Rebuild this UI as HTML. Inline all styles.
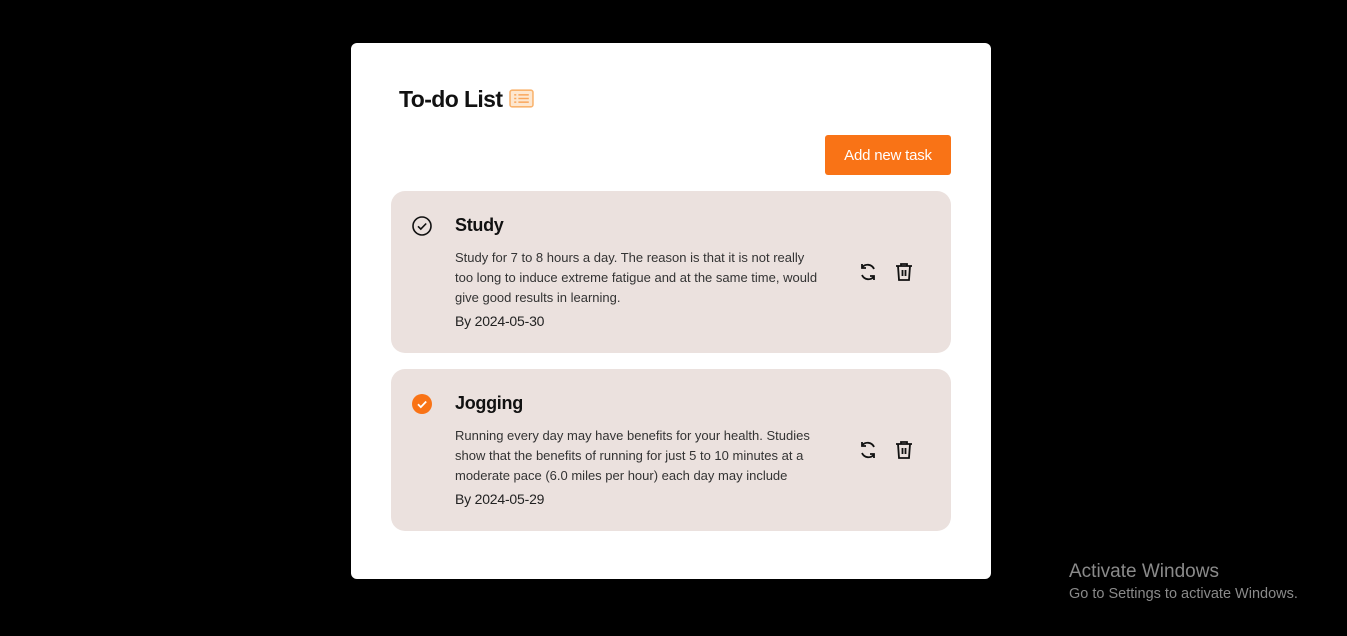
<!DOCTYPE html>
<html><head><style>
body{margin:0;width:1347px;height:636px;background:#000;font-family:"Liberation Sans",sans-serif;position:relative;overflow:hidden}
.card{position:absolute;left:351px;top:43px;width:640px;height:536px;background:#fff;border-radius:6px}
h1{position:absolute;left:48px;top:43px;margin:0;font-size:23px;font-weight:bold;color:#111;letter-spacing:-0.6px}
.btn{position:absolute;left:474px;top:92px;width:126px;height:40px;background:#f97316;color:#fff;border-radius:3px;font-size:15px;line-height:42px;text-align:center;letter-spacing:-0.2px}
.task{position:absolute;left:40px;width:560px;height:162px;background:#ebe1de;border-radius:14px}
.task h2{position:absolute;left:64px;top:24px;margin:0;font-size:18px;font-weight:bold;color:#111;letter-spacing:-0.3px}
.task p{position:absolute;left:64px;top:57px;margin:0;width:370px;font-size:13px;line-height:20px;color:#333}
.task .by{position:absolute;left:64px;top:122px;font-size:14px;color:#222;letter-spacing:-0.2px}
.chk{position:absolute;left:20px;top:24px}
.ic{position:absolute;top:70px}
.wm{position:absolute;left:1069px;top:561px;color:#8a8a8a}
</style></head><body>
<div class="card">
<h1>To-do List <svg width="25" height="19" viewBox="0 0 24 18" style="vertical-align:-1px;margin-left:1px"><rect x="1" y="1" width="22" height="16" rx="2" fill="#fde7d0" stroke="#f9b36e" stroke-width="1.5"/><g stroke="#f9a55a" stroke-width="1.4"><line x1="5" y1="5.5" x2="7" y2="5.5"/><line x1="9" y1="5.5" x2="19" y2="5.5"/><line x1="5" y1="9" x2="7" y2="9"/><line x1="9" y1="9" x2="19" y2="9"/><line x1="5" y1="12.5" x2="7" y2="12.5"/><line x1="9" y1="12.5" x2="19" y2="12.5"/></g></svg></h1>
<div class="btn">Add new task</div>
<div class="task" style="top:148px">
<svg class="chk" width="22" height="22" viewBox="0 0 22 22"><circle cx="11" cy="11" r="9" fill="none" stroke="#111" stroke-width="1.6"/><path d="M7 11.3l2.8 2.8 5.4-5.6" fill="none" stroke="#111" stroke-width="1.6"/></svg>
<h2>Study</h2>
<p>Study for 7 to 8 hours a day. The reason is that it is not really too long to induce extreme fatigue and at the same time, would give good results in learning.</p>
<div class="by">By 2024-05-30</div>
<svg class="ic" style="left:466px" width="22" height="22" viewBox="0 0 22 22" fill="none" stroke="#111" stroke-width="1.8"><path d="M17 8A7 7 0 0 0 5 6.5M5 14a7 7 0 0 0 12 1.5"/><path d="M5 3v4h4M17 19v-4h-4"/></svg>
<svg class="ic" style="left:502px" width="22" height="22" viewBox="0 0 22 22" fill="none" stroke="#111" stroke-width="1.8"><path d="M3 5h16M8 5V3h6v2M5 5l1 14h10l1-14M9.5 9v6M12.5 9v6"/></svg>
</div>
<div class="task" style="top:326px">
<svg class="chk" width="22" height="22" viewBox="0 0 22 22"><circle cx="11" cy="11" r="10" fill="#f97316"/><path d="M7 11.3l2.8 2.8 5.4-5.6" fill="none" stroke="#fff" stroke-width="1.8"/></svg>
<h2>Jogging</h2>
<p>Running every day may have benefits for your health. Studies show that the benefits of running for just 5 to 10 minutes at a moderate pace (6.0 miles per hour) each day may include</p>
<div class="by">By 2024-05-29</div>
<svg class="ic" style="left:466px" width="22" height="22" viewBox="0 0 22 22" fill="none" stroke="#111" stroke-width="1.8"><path d="M17 8A7 7 0 0 0 5 6.5M5 14a7 7 0 0 0 12 1.5"/><path d="M5 3v4h4M17 19v-4h-4"/></svg>
<svg class="ic" style="left:502px" width="22" height="22" viewBox="0 0 22 22" fill="none" stroke="#111" stroke-width="1.8"><path d="M3 5h16M8 5V3h6v2M5 5l1 14h10l1-14M9.5 9v6M12.5 9v6"/></svg>
</div>
</div>
<div class="wm"><div style="font-size:19px">Activate Windows</div><div style="font-size:14.5px;margin-top:3px">Go to Settings to activate Windows.</div></div>
</body></html>
